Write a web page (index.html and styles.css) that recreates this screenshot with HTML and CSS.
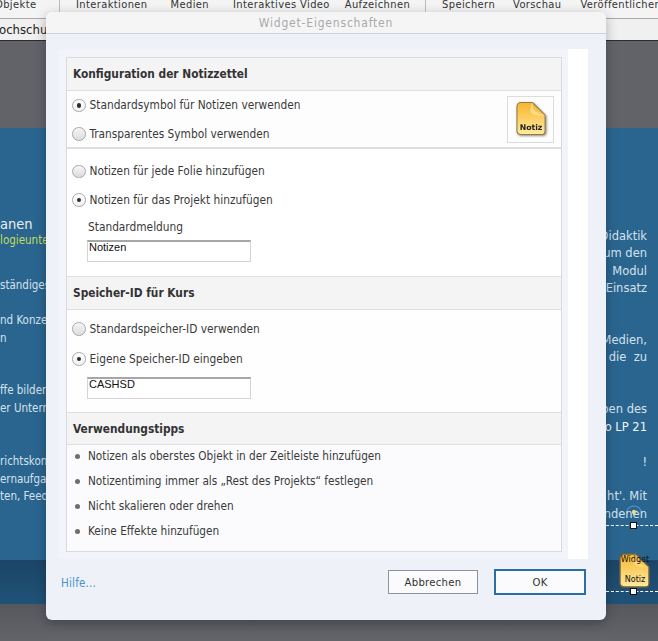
FILE: index.html
```html
<!DOCTYPE html>
<html lang="de">
<head>
<meta charset="utf-8">
<title>Widget-Eigenschaften</title>
<link rel="stylesheet" href="styles.css">
</head>
<body>
<div class="stage">
  <nav class="toolbar">
    <span class="tool tool-objekte">Objekte</span>
    <span class="tool tool-inter">Interaktionen</span>
    <span class="tool tool-medien">Medien</span>
    <span class="tool tool-video">Interaktives Video</span>
    <span class="tool tool-auf">Aufzeichnen</span>
    <span class="tool tool-spei">Speichern</span>
    <span class="tool tool-vor">Vorschau</span>
    <span class="tool tool-ver">Veröffentlichen</span>
  </nav>
  <div class="tabbar"><span class="tabname">ochschule</span></div>
  <div class="gray-top"></div>
  <div class="slide">
    <div class="col-left">
      <div class="slide-title">anen</div>
      <div class="slide-sub">logieunterstützt</div>
      <div class="left-body">
        <p>ständiges Lernen</p>
        <p class="gap1">nd Konzepte</p>
        <p>n</p>
        <p class="gap2">ffe bilden den</p>
        <p>er Unterricht</p>
        <p class="gap3">richtskonzepte</p>
        <p>ernaufgaben</p>
        <p>ten, Feedback</p>
      </div>
    </div>
    <div class="col-right">
      <p>Didaktik</p>
      <p>um den</p>
      <p>Modul</p>
      <p>Einsatz</p>
      <p class="gap-r1">Medien,</p>
      <p>die&nbsp;&nbsp;zu</p>
      <p class="gap-r1">ben des</p>
      <p class="bright">o LP 21</p>
      <p class="gap-r2">!</p>
      <p class="gap-r2">ht'. Mit</p>
      <p>ndenen</p>
    </div>
  </div>
  <div class="slide-foot"></div>
  <div class="gray-bottom"></div>

  <div class="sel-line sel-line-a"></div>
  <div class="sel-line sel-line-b"></div>
  <div class="handle handle-a"></div>
  <div class="handle handle-b"></div>
  <svg class="spinner" viewBox="0 0 24 24" width="24" height="24" aria-hidden="true">
    <path d="M5 13a7.500 7.500 0 0 1 14 0" fill="none" stroke="#4d8fc4" stroke-width="1.2"/>
    <circle cx="12" cy="14" r="2.200" fill="#e6d68a"/>
  </svg>
  <div class="stage-widget">
    <svg viewBox="0 0 32 36" width="32" height="36" aria-hidden="true">
      <defs>
        <linearGradient id="noteB" x1="0" y1="0" x2="0" y2="1">
          <stop offset="0" stop-color="#f6b62f"/>
          <stop offset="1" stop-color="#ffeaa0"/>
        </linearGradient>
      </defs>
      <path d="M5 1h12l13 13v17a3 3 0 0 1-3 3H5a4 4 0 0 1-4-3V5a4 4 0 0 1 4-4z" fill="url(#noteB)" stroke="#6f6040" stroke-width="1.4"/>
      <path d="M17 1c0 8 3 11 13 13c-6 1-14 0-15-4c-.5-3 .5-6 2-9z" fill="#ffd980"/>
    </svg>
    <span class="widget-top">Widget</span>
    <span class="widget-bottom">Notiz</span>
  </div>

  <section class="dialog">
    <header class="dialog-title">Widget-Eigenschaften</header>
    <div class="dialog-content">
      <div class="card">
        <h2 class="card-head card-head-first">Konfiguration der Notizzettel</h2>
        <div class="sec sec-icon">
          <div class="rows">
            <label class="row"><input class="radio" type="radio" name="sym" checked>Standardsymbol für Notizen verwenden</label>
            <label class="row"><input class="radio" type="radio" name="sym">Transparentes Symbol verwenden</label>
          </div>
          <div class="icon-box">
            <svg class="note-icon" viewBox="0 0 32 36" width="31" height="36" aria-hidden="true">
              <defs>
                <linearGradient id="noteA" x1="0" y1="0" x2="0" y2="1">
                  <stop offset="0" stop-color="#f8b52c"/>
                  <stop offset="1" stop-color="#ffeb9c"/>
                </linearGradient>
              </defs>
              <path d="M5 1h12l13 13v17a3 3 0 0 1-3 3H5a4 4 0 0 1-4-3V5a4 4 0 0 1 4-4z" fill="url(#noteA)" stroke="#8d7c55" stroke-width="1.100"/>
              <path d="M17 1c0 8 3 11 13 13c-6 1-14 0-15-4c-.5-3 .5-6 2-9z" fill="#ffdc85"/>
              <text class="icon-text" x="15.500" y="29" text-anchor="middle">Notiz</text>
            </svg>
          </div>
        </div>
        <div class="sec sec-notes">
          <label class="row"><input class="radio" type="radio" name="scope">Notizen für jede Folie hinzufügen</label>
          <label class="row"><input class="radio" type="radio" name="scope" checked>Notizen für das Projekt hinzufügen</label>
          <div class="field-label">Standardmeldung</div>
          <input class="field" type="text" value="Notizen">
        </div>
        <h2 class="card-head">Speicher-ID für Kurs</h2>
        <div class="sec sec-store">
          <label class="row row-tall"><input class="radio" type="radio" name="store">Standardspeicher-ID verwenden</label>
          <label class="row row-tall"><input class="radio" type="radio" name="store" checked>Eigene Speicher-ID eingeben</label>
          <input class="field field-store" type="text" value="CASHSD">
        </div>
        <h2 class="card-head card-head-last">Verwendungstipps</h2>
        <ul class="tips">
          <li>Notizen als oberstes Objekt in der Zeitleiste hinzufügen</li>
          <li>Notizentiming immer als „Rest des Projekts“ festlegen</li>
          <li>Nicht skalieren oder drehen</li>
          <li>Keine Effekte hinzufügen</li>
        </ul>
      </div>
      <div class="strip"></div>
    </div>
    <footer class="dialog-foot">
      <a class="help">Hilfe...</a>
      <button class="btn btn-cancel" type="button">Abbrechen</button>
      <button class="btn btn-ok" type="button">OK</button>
    </footer>
  </section>
</div>
</body>
</html>
```
FILE: styles.css
```css
* { box-sizing: border-box; }
html, body { margin: 0; padding: 0; }
body { width: 658px; height: 641px; overflow: hidden; font-family: "DejaVu Sans Condensed", "DejaVu Sans", sans-serif; color: #333; }
p, h2, ul { margin: 0; padding: 0; }

.stage { position: relative; width: 658px; height: 641px; overflow: hidden; display: flex; flex-direction: column; background: #5c5e64; }

.toolbar { height: 19px; flex: none; display: flex; align-items: flex-start; white-space: nowrap; background: #f4f4f4; border-bottom: 1px solid #a9a9a9; font-size: 11px; line-height: 9px; letter-spacing: .4px; color: #333; overflow: hidden; }
.tool { display: block; flex: none; }
.tool-objekte { margin-left: -5px; width: 65px; height: 18px; border-right: 1px solid #bbb; }
.tool-inter { margin-left: 16px; }
.tool-medien { margin-left: 23px; }
.tool-video { margin-left: 24px; }
.tool-auf { margin-left: 15px; padding-right: 15px; height: 18px; border-right: 1px solid #bbb; }
.tool-spei { margin-left: 16px; }
.tool-vor { margin-left: 18px; }
.tool-ver { margin-left: 19px; }

.tabbar { height: 22px; flex: none; background: #f0f0f0; border-bottom: 1px solid #2c2c2c; font-size: 13px; line-height: 21px; color: #222; overflow: hidden; white-space: nowrap; }
.tabname { display: block; margin-left: -1px; }

.gray-top { height: 87px; flex: none; background: #616369; }

.slide { height: 432px; flex: none; display: flex; justify-content: space-between; background: #2a6590; color: #d5e2ec; font-size: 11.5px; line-height: 17.4px; overflow: hidden; white-space: nowrap; }
.slide p { height: 17.4px; }
.col-left { padding-top: 87px; }
.slide-title { font-size: 14.5px; line-height: 18px; color: #e8eff4; }
.slide-sub { font-size: 11.5px; line-height: 14px; margin-top: 0; color: #c0dc5c; }
.left-body { margin-top: 30px; }
.left-body p { height: 17.7px; }
.gap1 { margin-top: 17.4px; }
.gap2 { margin-top: 35px; }
.gap3 { margin-top: 35px; }
.col-right { padding: 100px 11px 0 0; text-align: right; font-family: "DejaVu Sans", sans-serif; }
.gap-r1 { margin-top: 34.5px; }
.gap-r2 { margin-top: 17.4px; }
.bright { color: #f0f5f8; }

.slide-foot { height: 44px; flex: none; background: linear-gradient(#1c4566, #1f5278); }
.gray-bottom { flex: 1; background: linear-gradient(#56585e, #62646a); }

.sel-line { position: absolute; left: 606px; right: 0; border-top: 1px dashed #fff; }
.sel-line-a { top: 525px; }
.sel-line-b { top: 591px; }
.handle { position: absolute; left: 630px; width: 7px; height: 7px; background: #fff; border: 1px solid #111; }
.handle-a { top: 522px; }
.handle-b { top: 588px; }
.spinner { position: absolute; left: 622px; top: 498px; }
.stage-widget { position: absolute; left: 619px; top: 553px; width: 32px; height: 36px; }
.stage-widget svg { display: block; }
.widget-top, .widget-bottom { position: absolute; left: 0; width: 32px; text-align: center; font-size: 9px; line-height: 10px; color: #111; }
.widget-top { top: 1px; }
.widget-bottom { top: 21px; }

.dialog { position: absolute; left: 46px; top: 12px; width: 560px; height: 608px; display: flex; flex-direction: column; background: #eef1f7; border-radius: 6px; box-shadow: 0 3px 12px rgba(0,0,0,.28); overflow: hidden; }
.dialog-title { height: 22px; flex: none; background: #f5f5f6; border-bottom: 1px solid #cfd1d8; text-align: center; font-size: 12px; line-height: 23px; letter-spacing: .8px; color: #a9a9ab; }
.dialog-content { height: 510px; flex: none; margin: 15px 18px 0 12px; display: flex; background: #f2f4f9; padding-top: 8px; padding-left: 8px; position: relative; }
.card { width: 496px; height: 495px; flex: none; background: #fff; border: 1px solid #d8dae2; display: flex; flex-direction: column; }
.strip { position: absolute; top: 0; right: 0; width: 20px; height: 510px; background: #fff; }

.card-head { height: 34px; flex: none; padding-left: 6px; background: #f4f4f5; border-top: 1px solid #dddfe5; border-bottom: 1px solid #dddfe5; font-size: 11.8px; line-height: 32px; font-weight: 700; color: #333; }
.card-head-first { height: 33px; border-top: 0; }
.card-head-last { height: 33px; line-height: 33px; }

.row { display: flex; align-items: center; gap: 4px; height: 28.5px; padding-left: 5px; font-size: 11.8px; color: #3a3a3a; white-space: nowrap; }
.row-tall { height: 30px; }
.radio { appearance: none; -webkit-appearance: none; flex: none; margin: 0; width: 13.5px; height: 13.5px; border-radius: 50%; border: 1px solid #a8a8ac; background: linear-gradient(#f6f6f6, #dcdcdc); display: grid; place-content: center; }
.radio:checked { background: linear-gradient(#fff, #f0f0f0); }
.radio:checked::before { content: ""; display: block; width: 4.5px; height: 4.5px; border-radius: 50%; background: #2e2e2e; }

.sec { flex: none; }
.sec-icon { height: 58px; display: flex; justify-content: space-between; align-items: flex-start; background: #fdfdfe; border-bottom: 2px solid #dddfe5; }
.icon-box { width: 47px; height: 47px; margin: 5px 7px 0 0; border: 1px solid #dadce2; background: #fdfdfd; display: grid; place-content: center; }
.note-icon { display: block; overflow: visible; margin: -1px 0 0 1px; filter: drop-shadow(1px 1px 1px rgba(70,60,30,.6)); }
.icon-text { font-family: "DejaVu Sans", sans-serif; font-size: 8px; font-weight: 700; fill: #222; }

.sec-notes { height: 127px; padding-top: 8px; }
.field-label { padding-left: 21px; margin-top: 5px; font-size: 11.8px; line-height: 16px; color: #3a3a3a; }
.field { display: block; margin: 5px 0 0 20px; width: 164px; height: 22px; padding: 0 1px 10px 1px; border: 1px solid #d4d4d6; border-top: 2px solid #a6a6a8; border-radius: 0; background: #fff; font-family: "Liberation Sans", sans-serif; font-size: 11px; line-height: 12px; color: #111; outline: 0; }

.sec-store { height: 102px; padding-top: 4px; background: #fefefe; }
.field-store { margin-top: 3px; }

.tips { list-style: none; flex: 1; background: #fbfbfd; }
.tips li { position: relative; height: 25px; padding-left: 21px; font-size: 11.7px; line-height: 23px; color: #3a3a3a; white-space: nowrap; }
.tips li::before { content: ""; position: absolute; left: 8px; top: 9px; width: 5px; height: 5px; border-radius: 50%; background: #6e6e70; }

.dialog-foot { flex: 1; position: relative; display: flex; align-items: flex-start; padding: 10px 20px 0 15px; font-size: 11px; }
.help { color: #4a93cc; font-size: 11.5px; line-height: 26px; margin-top: 1px; margin-right: auto; letter-spacing: .2px; }
.btn { font-family: "DejaVu Sans Condensed", "DejaVu Sans", sans-serif; font-size: 11.2px; letter-spacing: .3px; color: #333; background: #fbfbfd; padding: 0; border-radius: 0; }
.btn-cancel { width: 90px; height: 24px; margin-top: 1px; border: 1px solid #8e92a0; }
.btn-ok { width: 92px; height: 26px; margin-left: 16px; border: 2px solid #2a6ea8; }
```
